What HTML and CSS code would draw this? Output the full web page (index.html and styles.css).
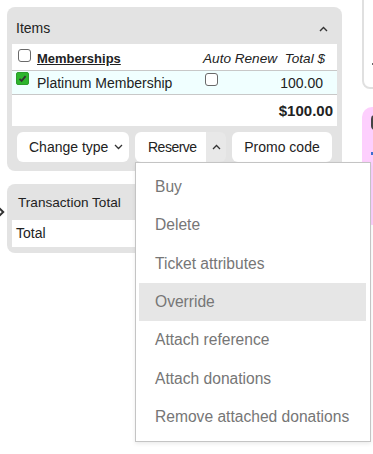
FILE: index.html
```html
<!DOCTYPE html>
<html>
<head>
<meta charset="utf-8">
<link rel="stylesheet" href="styles.css">
</head>
<body>
<div class="page">
  <div class="left">
    <section class="panel">
      <div class="panel-head">
        <span>Items</span>
        <svg class="caret" width="9" height="6" viewBox="0 0 9 6"><path d="M1 5 L4.5 1.5 L8 5" fill="none" stroke="#333" stroke-width="1.4"/></svg>
      </div>
      <div class="grid-body">
        <div class="row head">
          <div class="cell first"><span class="cb cb-head"></span><span class="title">Memberships</span></div>
          <div class="cell it">Auto Renew</div>
          <div class="cell it end">Total $</div>
        </div>
        <div class="row item">
          <div class="cell first"><span class="cb checked"><svg width="11" height="11" viewBox="0 0 11 11"><path d="M2.5 5.8 L4.6 7.9 L8.6 3.2" fill="none" stroke="#333" stroke-width="1.8"/></svg></span><span class="name">Platinum Membership</span></div>
          <div class="cell"><span class="cb cb-auto"></span></div>
          <div class="cell end amount">100.00</div>
        </div>
        <div class="row sum">
          <div class="sum-val">$100.00</div>
        </div>
      </div>
      <div class="actions">
        <button class="btn btn-change">Change type <svg width="9" height="6" viewBox="0 0 9 6"><path d="M1 1 L4.5 4.5 L8 1" fill="none" stroke="#333" stroke-width="1.3"/></svg></button>
        <div class="split">
          <button class="btn btn-main">Reserve</button>
          <button class="btn btn-toggle"><svg width="9" height="6" viewBox="0 0 9 6"><path d="M1 5 L4.5 1.5 L8 5" fill="none" stroke="#333" stroke-width="1.3"/></svg></button>
          <ul class="menu">
            <li>Buy</li>
            <li>Delete</li>
            <li>Ticket attributes</li>
            <li class="active">Override</li>
            <li>Attach reference</li>
            <li>Attach donations</li>
            <li>Remove attached donations</li>
          </ul>
        </div>
        <button class="btn btn-promo">Promo code</button>
      </div>
    </section>
    <div class="tx-wrap">
      <svg class="side-arrow" width="7" height="10" viewBox="0 0 7 10"><path d="M-1 1 L3.2 5 L-1 9" fill="none" stroke="#333" stroke-width="2"/></svg>
      <section class="panel tx">
        <div class="tx-head">Transaction Total</div>
        <div class="tx-row">Total</div>
      </section>
    </div>
  </div>
  <div class="side">
    <div class="card-outline"><span class="peek-mark"></span></div>
    <div class="card-pink"><span class="peek-dark"></span><span class="peek-blue"></span></div>
  </div>
</div>
</body>
</html>
```

FILE: styles.css
```css
html, body {
  margin: 0;
  padding: 0;
}
body {
  width: 373px;
  height: 454px;
  overflow: hidden;
  background: #fff;
  color: #222;
  font-family: "Liberation Sans", Arial, sans-serif;
  font-size: 14px;
}
.page {
  display: flex;
  gap: 20px;
  padding: 7px 0 0 7px;
  align-items: flex-start;
}
.left {
  width: 335px;
  flex: none;
  display: flex;
  flex-direction: column;
  gap: 13px;
}
.panel {
  background: #e3e3e3;
  border-radius: 8px;
  padding: 0 5px 9px;
}
.panel-head {
  display: flex;
  justify-content: space-between;
  align-items: center;
  height: 14px;
  line-height: 14px;
  padding: 14px 9px 9px 4px;
  font-size: 14px;
}
.caret {
  margin-top: 1px;
}
.grid-body {
  background: #fff;
}
.row {
  display: grid;
  grid-template-columns: 191px 82px 52px;
  align-items: center;
}
.row.head {
  height: 26px;
  border-bottom: 1px solid #c8c8c8;
}
.row.item {
  height: 23px;
  background: #f0ffff;
  border-bottom: 1px solid #c8c8c8;
}
.row.sum {
  height: 31px;
  display: flex;
  justify-content: flex-end;
  align-items: center;
}
.cell {
  display: flex;
  align-items: center;
  white-space: nowrap;
  min-width: 0;
}
.cell.first {
  padding-left: 6px;
}
.row.item .cell.first {
  padding-left: 4px;
}
.cell.end {
  justify-content: flex-end;
  padding-right: 12px;
}
.cell.amount {
  padding-right: 14px;
}
.it {
  font-style: italic;
  font-size: 13.6px;
  margin-top: 2px;
}
.title {
  font-weight: bold;
  text-decoration: underline;
  font-size: 13px;
  margin-left: 6px;
  margin-top: 2px;
}
.name {
  margin-left: 8px;
  margin-top: 1px;
}
.cb {
  display: inline-block;
  box-sizing: border-box;
  width: 13px;
  height: 13px;
  border: 1px solid #6a6a6a;
  border-radius: 3px;
  background: #fff;
  flex: none;
}
.cb-head {
  margin-top: -4px;
}
.cb.checked {
  background: #2db52d;
  border-color: #2a9e2a;
  border-radius: 2px;
  margin-top: -9px;
}
.cb.checked svg {
  display: block;
  margin: 0;
}
.cb-auto {
  margin-left: 2px;
  margin-top: -7px;
}
.sum-val {
  font-weight: bold;
  font-size: 15px;
  padding-right: 4px;
}
.actions {
  display: flex;
  gap: 6px;
  margin: 6px 0 0 5px;
  height: 30px;
}
.btn {
  height: 30px;
  border: none;
  border-radius: 6px;
  background: #fff;
  font-family: inherit;
  font-size: 14px;
  color: #222;
  display: inline-flex;
  align-items: center;
  padding: 0;
  margin: 0;
}
.btn-change {
  width: 112px;
  padding-left: 12px;
  gap: 6px;
}
.split {
  position: relative;
  display: flex;
}
.btn-main {
  width: 71px;
  padding-left: 13px;
  border-radius: 6px 0 0 6px;
  font-size: 14px;
  letter-spacing: -0.5px;
}
.btn-toggle {
  width: 20px;
  justify-content: center;
  background: #e8e8e8;
  border-radius: 0 6px 6px 0;
}
.btn-promo {
  width: 100px;
  justify-content: center;
}
.menu {
  position: absolute;
  top: 30px;
  left: 0;
  width: 236px;
  box-sizing: border-box;
  margin: 0;
  padding: 5px 4px 5px 3px;
  list-style: none;
  background: #fff;
  border: 1px solid #c4c4c4;
  box-shadow: 0 2px 4px rgba(0,0,0,0.08);
  z-index: 5;
}
.menu li {
  padding: 8px 16px;
  line-height: 22.33px;
  font-size: 15.6px;
  color: #767676;
  white-space: nowrap;
}
.menu li.active {
  background: #e6e6e6;
}
.tx-wrap {
  display: flex;
  align-items: flex-start;
  margin-left: -7px;
}
.side-arrow {
  flex: none;
  margin-top: 23px;
}
.tx {
  flex: 1;
  padding-bottom: 6px;
}
.tx-head {
  height: 14px;
  line-height: 14px;
  padding: 12px 6px 10px;
  font-size: 13.6px;
}
.tx-row {
  background: #fff;
  height: 27px;
  line-height: 27px;
  padding-left: 4px;
}
.side {
  width: 60px;
  flex: none;
  display: flex;
  flex-direction: column;
  gap: 18px;
  margin-top: -27px;
}
.card-outline {
  height: 109px;
  box-sizing: border-box;
  border: 2px solid #e0e0e0;
  border-radius: 8px;
  padding: 81px 0 0 8px;
}
.peek-mark {
  display: block;
  width: 3px;
  height: 2px;
  background: #666;
}
.card-pink {
  height: 110px;
  background: #fdcffd;
  border-radius: 10px;
  padding: 8px 0 0 9px;
  display: flex;
  flex-direction: column;
}
.peek-dark {
  display: block;
  width: 4px;
  height: 15px;
  border-radius: 8px 0 0 8px;
  border-left: 2px solid #444;
  box-sizing: border-box;
}
.peek-blue {
  display: block;
  width: 3px;
  height: 3px;
  margin-top: 22px;
  background: #3b6fd0;
}
```
